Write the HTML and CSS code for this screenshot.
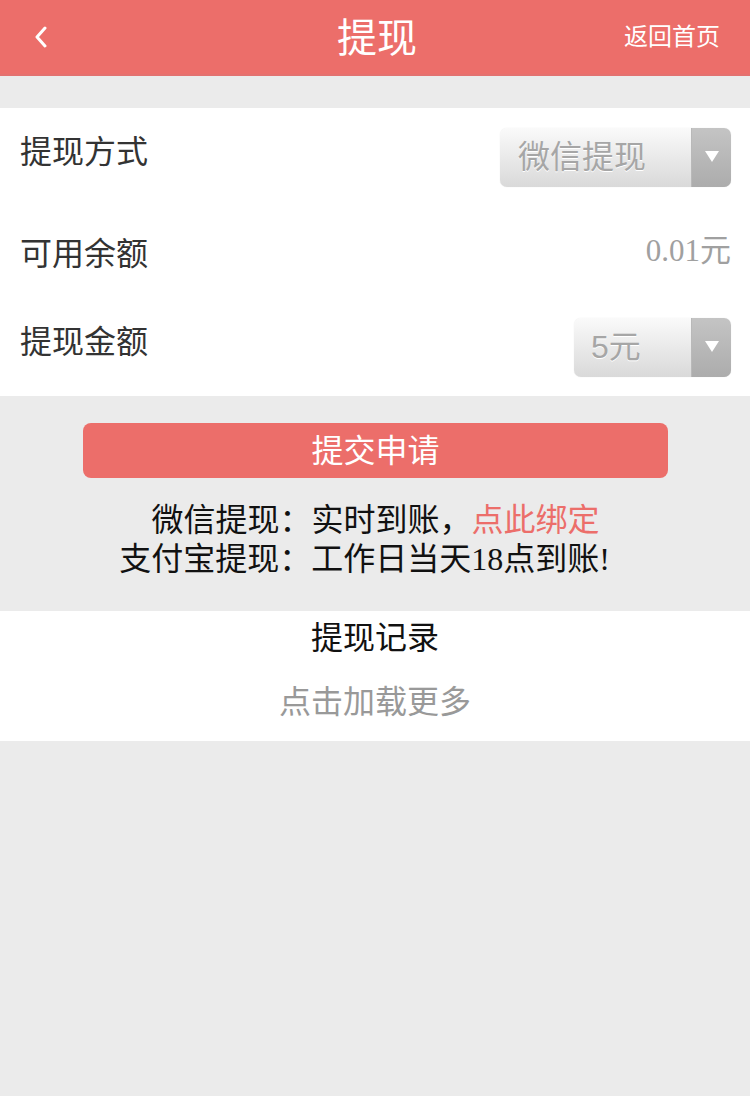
FILE: index.html
```html
<!DOCTYPE html>
<html lang="zh">
<head>
<meta charset="utf-8">
<title>提现</title>
<link rel="stylesheet" href="styles.css">
</head>
<body>
<header class="topbar">
  <a class="back" href="#" aria-label="返回">
    <svg width="14" height="22" viewBox="0 0 14 22"><path d="M11 2 L3 11 L11 20" fill="none" stroke="#fff" stroke-width="3" stroke-linecap="round" stroke-linejoin="round"/></svg>
  </a>
  <h1 class="title">提现</h1>
  <a class="home" href="#">返回首页</a>
</header>

<div class="gap"></div>

<section class="form">
  <div class="row row-first">
    <span class="label">提现方式</span>
    <div class="select select-wide">
      <span class="select-text">微信提现</span>
      <span class="select-arrow"></span>
    </div>
  </div>
  <div class="row row-mid">
    <span class="label">可用余额</span>
    <span class="balance">0.01元</span>
  </div>
  <div class="row row-last">
    <span class="label">提现金额</span>
    <div class="select select-narrow">
      <span class="select-text">5元</span>
      <span class="select-arrow"></span>
    </div>
  </div>
</section>

<section class="actions">
  <button class="submit">提交申请</button>
  <p class="notes">
    <span class="line">微信提现：实时到账，<a class="bind" href="#">点此绑定</a></span>
    <span class="line line-2">支付宝提现：工作日当天18点到账!</span>
  </p>
</section>

<section class="records">
  <div class="records-title">提现记录</div>
  <div class="load-more">点击加载更多</div>
</section>
</body>
</html>
```
FILE: styles.css
```css
html, body {
  margin: 0;
  padding: 0;
}
body {
  width: 750px;
  min-height: 1096px;
  background: #ebebeb;
  font-family: "Liberation Serif", "Noto Sans CJK SC", serif;
  color: #111;
}
a { text-decoration: none; }

.topbar {
  height: 74px;
  background: #ec6e6a;
  border-bottom: 2px solid #e3716f;
  display: grid;
  grid-template-columns: 1fr auto 1fr;
  align-items: center;
  padding: 0 30px 0 34px;
}
.back {
  display: flex;
  align-items: center;
  justify-self: start;
  height: 40px;
}
.title {
  margin: 0;
  font-family: "Noto Sans CJK SC", sans-serif;
  font-weight: 400;
  font-size: 40px;
  color: #fff;
  line-height: 70px;
  padding-bottom: 4px;
}
.home {
  justify-self: end;
  font-family: "Noto Sans CJK SC", sans-serif;
  color: #fff;
  font-size: 24px;
  line-height: 70px;
  padding-bottom: 4px;
}

.gap { height: 32px; }

.form {
  background: #fff;
  padding: 0 19px 0 20px;
}
.row {
  display: flex;
  justify-content: space-between;
  align-items: flex-start;
}
.row-first { padding-top: 20px; }
.row-mid { padding-top: 40px; padding-bottom: 43px; align-items: center; }
.row-last { padding-bottom: 19px; }
.label {
  font-family: "Noto Sans CJK SC", sans-serif;
  font-size: 32px;
  line-height: 42px;
  color: #333;
}
.row-mid .label { line-height: 44px; }
.balance {
  font-size: 31px;
  line-height: 48px;
  color: #a0a0a0;
}

.select {
  height: 59px;
  display: flex;
  border-radius: 7px;
  overflow: hidden;
  background: linear-gradient(#fafafa, #d9d9d9);
  box-shadow: 0 0 1px rgba(0,0,0,0.15);
}
.select-wide { width: 231px; }
.select-narrow { width: 157px; }
.select-text {
  flex: 1;
  padding-left: 18px;
  font-family: "Liberation Sans", "Noto Sans CJK SC", sans-serif;
  font-size: 32px;
  line-height: 59px;
  color: #a6a6a6;
  text-shadow: 0 1px 0 #fff;
}
.select-narrow .select-text { padding-left: 17px; }
.select-arrow {
  width: 39px;
  background: linear-gradient(#c4c4c4, #acacac);
  position: relative;
  border-left: 1px solid #b9b9b9;
}
.select-arrow::after {
  content: "";
  position: absolute;
  left: 13px;
  top: 23px;
  border-left: 7px solid transparent;
  border-right: 7px solid transparent;
  border-top: 11px solid #fff;
}

.actions {
  padding: 27px 82px 32px 83px;
  text-align: center;
}
.submit {
  display: block;
  width: 585px;
  height: 55px;
  border: 0;
  border-radius: 8px;
  background: #ec6e6a;
  color: #fff;
  font-family: "Noto Sans CJK SC", sans-serif;
  font-size: 32px;
  line-height: 51px;
  padding: 0 0 4px 0;
}
.notes {
  margin: 23px 0 0 0;
  font-size: 32px;
  line-height: 39px;
}
.line { display: block; }
.line-2 { padding-right: 22px; }
.bind { color: #ec6e6a; }

.records {
  background: #fff;
  text-align: center;
  padding-bottom: 18px;
}
.records-title {
  font-family: "Noto Sans CJK SC", sans-serif;
  font-size: 32px;
  line-height: 48px;
  color: #111;
}
.load-more {
  margin-top: 16px;
  font-family: "Noto Sans CJK SC", sans-serif;
  font-size: 32px;
  line-height: 48px;
  color: #999;
}
```
